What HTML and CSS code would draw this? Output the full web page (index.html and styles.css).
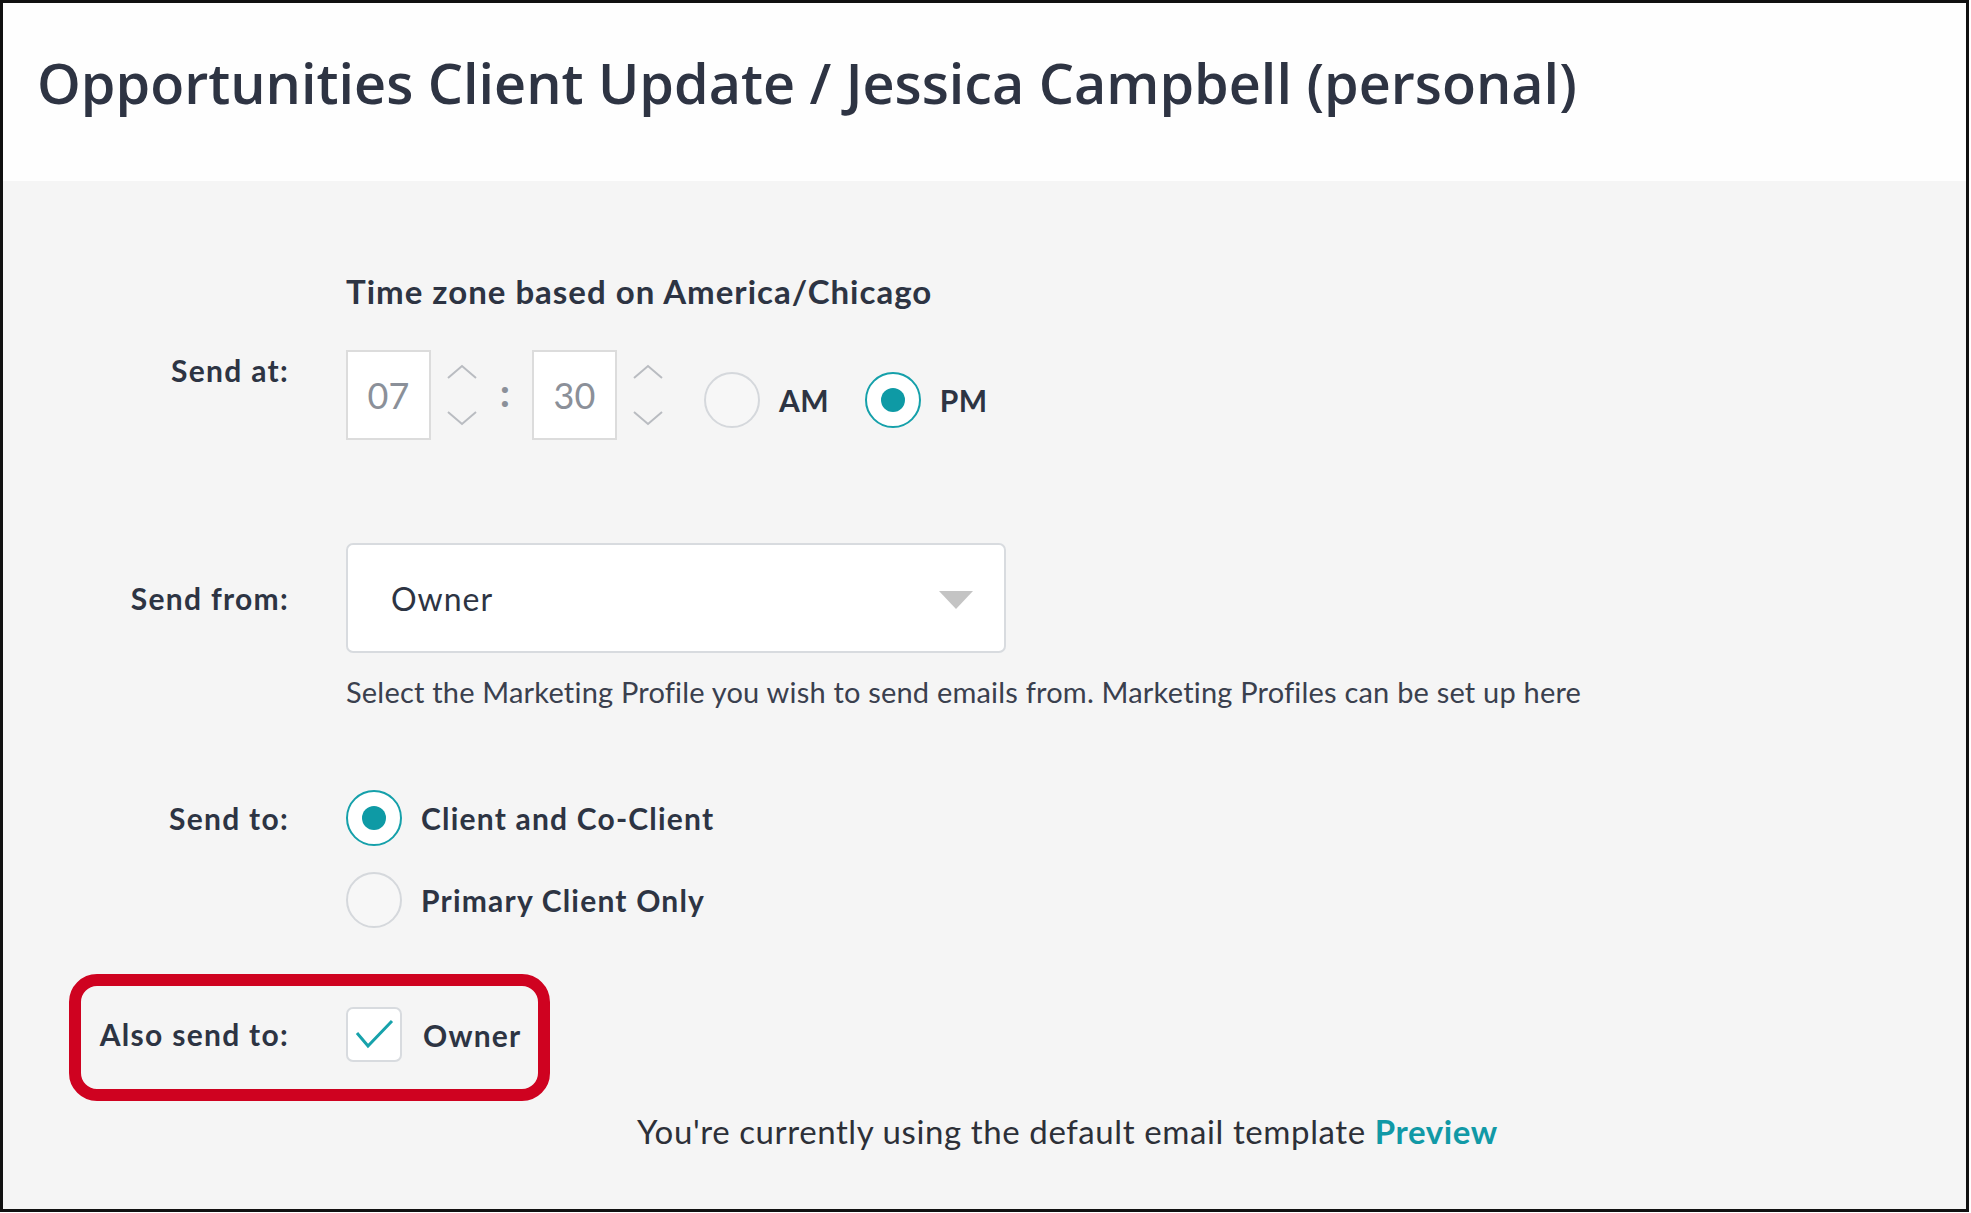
FILE: index.html
```html
<!DOCTYPE html>
<html lang="en">
<head>
<meta charset="utf-8">
<title>Opportunities Client Update</title>
<link rel="stylesheet" href="styles.css">
</head>
<body>
<div class="frame">
  <header class="head">
    <h1 class="title">Opportunities Client Update / Jessica Campbell (personal)</h1>
  </header>
  <main class="content">
    <div class="row row-tz">
      <div class="label"></div>
      <div class="tz">Time zone based on America/Chicago</div>
    </div>

    <div class="row row-at">
      <div class="label">Send at:</div>
      <div class="time">
        <div class="tbox">07</div>
        <div class="spin">
          <svg width="32" height="16" viewBox="0 0 32 16"><polyline points="2,14 16,2 30,14"/></svg>
          <svg width="32" height="16" viewBox="0 0 32 16"><polyline points="2,2 16,14 30,2"/></svg>
        </div>
        <div class="colon">:</div>
        <div class="tbox">30</div>
        <div class="spin">
          <svg width="32" height="16" viewBox="0 0 32 16"><polyline points="2,14 16,2 30,14"/></svg>
          <svg width="32" height="16" viewBox="0 0 32 16"><polyline points="2,2 16,14 30,2"/></svg>
        </div>
        <div class="ampm">
          <div class="opt"><span class="radio"></span><span class="opt-text ap">AM</span></div>
          <div class="opt"><span class="radio on"></span><span class="opt-text ap">PM</span></div>
        </div>
      </div>
    </div>

    <div class="row row-from">
      <div class="label">Send from:</div>
      <div class="select">
        <span class="select-text">Owner</span>
        <span class="caret"></span>
      </div>
    </div>
    <div class="row row-help">
      <div class="label"></div>
      <div class="help">Select the Marketing Profile you wish to send emails from. Marketing Profiles can be set up here</div>
    </div>

    <div class="row row-to">
      <div class="label">Send to:</div>
      <div class="opts">
        <div class="opt"><span class="radio on"></span><span class="opt-text">Client and Co-Client</span></div>
        <div class="opt"><span class="radio"></span><span class="opt-text">Primary Client Only</span></div>
      </div>
    </div>

    <div class="row row-also">
      <div class="label">Also send to:</div>
      <div class="opt opt-check">
        <span class="check">
          <svg width="52" height="51" viewBox="0 0 52 51"><polyline points="9,24 20,37 44,12"/></svg>
        </span>
        <span class="opt-text">Owner</span>
      </div>
    </div>

    <p class="template">You're currently using the default email template <a class="preview">Preview</a></p>
  </main>
</div>
</body>
</html>
```

FILE: styles.css
```css
*, *::before, *::after { box-sizing: border-box; }

html, body {
  margin: 0;
  padding: 0;
  background: #ffffff;
}

body {
  font-family: Lato, "Open Sans", sans-serif;
  color: #2d3443;
}

.frame {
  width: 1969px;
  height: 1212px;
  border: 3px solid #111111;
  background: #f5f5f5;
  display: flex;
  flex-direction: column;
  overflow: hidden;
}

.head {
  height: 178px;
  background: #fefefe;
  display: flex;
  align-items: center;
  padding-left: 34px;
  flex-shrink: 0;
}

.title {
  margin: 0;
  font-family: "Open Sans", sans-serif;
  font-weight: 600;
  font-size: 55.7px;
  line-height: 1;
  color: #2e3443;
  padding-bottom: 18px;
}

.content {
  padding-top: 90px;
  display: flex;
  flex-direction: column;
}

.row {
  display: grid;
  grid-template-columns: 286px 1fr;
  column-gap: 57px;
  align-items: start;
}

.label {
  text-align: right;
  font-weight: 700;
  font-size: 30px;
  line-height: 40px;
  letter-spacing: 1.3px;
  color: #2d3443;
}

.tz {
  font-weight: 700;
  font-size: 33px;
  line-height: 40px;
  letter-spacing: 1px;
}

.row-at { margin-top: 39px; }

.time {
  display: flex;
  align-items: center;
  height: 90px;
}

.tbox {
  width: 85px;
  height: 90px;
  background: #ffffff;
  border: 2px solid #dcdcdc;
  display: flex;
  align-items: center;
  justify-content: center;
  font-size: 36px;
  color: #8b9099;
}

.spin {
  width: 32px;
  margin-left: 15px;
  display: flex;
  flex-direction: column;
  gap: 30px;
}

.spin svg { display: block; }
.spin polyline {
  fill: none;
  stroke: #b9bcc1;
  stroke-width: 2;
}

.colon {
  width: 54px;
  text-align: center;
  font-size: 40px;
  font-weight: 700;
  color: #8b9099;
  padding-bottom: 6px;
}

.ampm {
  display: flex;
  align-items: center;
  gap: 36px;
  margin-left: 40px;
  margin-top: 10px;
}

.opt {
  display: flex;
  align-items: center;
  gap: 19px;
}

.opt-text {
  font-weight: 700;
  font-size: 30px;
  line-height: 40px;
  letter-spacing: 1.2px;
  color: #2d3443;
}

.opt-text.ap { letter-spacing: 0.3px; }

.radio {
  width: 56px;
  height: 56px;
  border-radius: 50%;
  border: 2px solid #d5d8dc;
  background: #f7f7f7;
  display: flex;
  align-items: center;
  justify-content: center;
  flex-shrink: 0;
}

.radio.on {
  border-color: #15a0aa;
  background: #ffffff;
}

.radio.on::after {
  content: "";
  width: 24px;
  height: 24px;
  border-radius: 50%;
  background: #0e9aa5;
}

.row-from {
  margin-top: 103px;
  align-items: center;
}

.select {
  width: 660px;
  height: 110px;
  background: #ffffff;
  border: 2px solid #d8dbdf;
  border-radius: 7px;
  display: flex;
  align-items: center;
  justify-content: space-between;
  padding: 0 31px 0 43px;
}

.select-text {
  font-size: 32px;
  letter-spacing: 1px;
  color: #2d3443;
}

.caret {
  width: 0;
  height: 0;
  border-left: 17px solid transparent;
  border-right: 17px solid transparent;
  border-top: 18px solid #c4c4c4;
  margin-top: 4px;
}

.row-help { margin-top: 21px; }

.help {
  font-size: 29px;
  line-height: 36px;
  letter-spacing: 0.2px;
  color: #3a404e;
  white-space: nowrap;
}

.row-to { margin-top: 80px; }
.row-to .label { line-height: 57px; }

.opts {
  display: flex;
  flex-direction: column;
  gap: 26px;
}

.row-also {
  margin-top: 79px;
  position: relative;
}

.row-also .label { line-height: 55px; }

.row-also::before {
  content: "";
  position: absolute;
  left: 66px;
  top: -33px;
  width: 481px;
  height: 127px;
  border: 12px solid #cf0220;
  border-radius: 28px;
  pointer-events: none;
}

.opt-check { gap: 21px; }

.check {
  display: block;
  width: 56px;
  height: 55px;
  background: #ffffff;
  border: 2px solid #d8dbdf;
  border-radius: 7px;
  flex-shrink: 0;
}

.check svg { display: block; }
.check polyline {
  fill: none;
  stroke: #17a2ab;
  stroke-width: 3;
}

.template {
  margin: 49px 0 0 634px;
  font-size: 33px;
  line-height: 40px;
  letter-spacing: 0.6px;
  color: #2d3038;
}

.preview {
  color: #1199a6;
  font-weight: 700;
  text-decoration: none;
}
```
